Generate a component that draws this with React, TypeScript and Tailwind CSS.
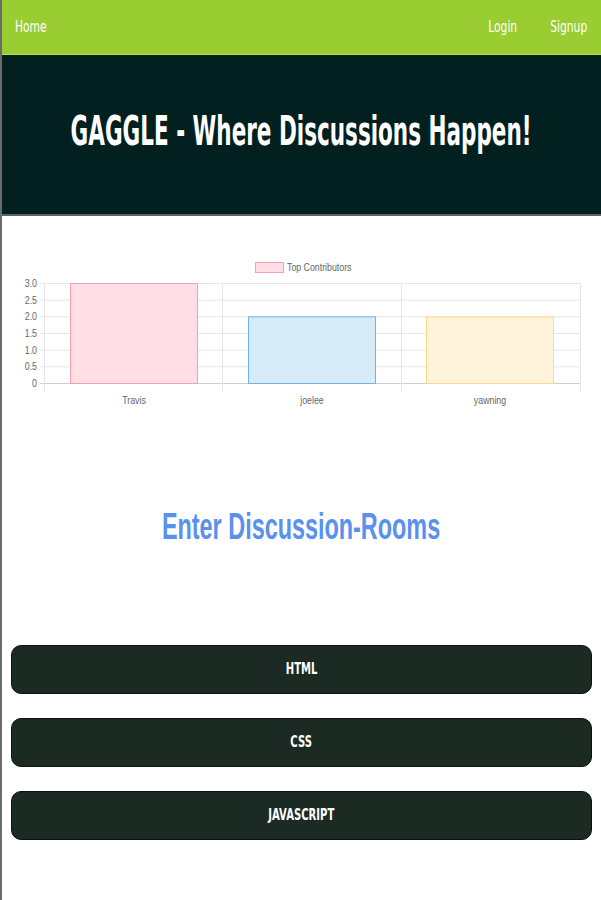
const rooms = ["HTML", "CSS", "JAVASCRIPT"];

const bars = [
  { name: "Travis", value: 3, x: 68, fill: "#ffdfe5", stroke: "#ff9db0" },
  { name: "joelee", value: 2, x: 246, fill: "#d7ebf8", stroke: "#6cb4e8" },
  { name: "yawning", value: 2, x: 424, fill: "#fff3dc", stroke: "#ffd98a" },
];

const chartFont = "Liberation Sans, Arial, sans-serif";

function ContributorsChart() {
  const top = 33;
  const bottom = 133;
  const ticks = [3, 2.5, 2, 1.5, 1, 0.5, 0];
  return (
    <svg width="599" height="160" viewBox="0 0 599 160" className="block">
      <rect x="253.5" y="12.5" width="28" height="10" fill="#ffdfe5" stroke="#ff9db0" />
      <text transform="translate(285 21) scale(0.8 1)" fontSize="11" fill="#666" fontFamily={chartFont}>
        Top Contributors
      </text>
      {ticks.map((t) => {
        const y = bottom - (t / 3) * (bottom - top);
        return (
          <g key={t}>
            <line x1="38" x2="578" y1={y + 0.5} y2={y + 0.5} stroke={t === 0 ? "#cfcfcf" : "#e6e6e6"} />
            <text
              transform={`translate(35 ${y + 4}) scale(0.8 1)`}
              fontSize="11"
              fill="#666"
              textAnchor="end"
              fontFamily={chartFont}
            >
              {t === 0 ? "0" : t.toFixed(1)}
            </text>
          </g>
        );
      })}
      {[42, 220, 399, 578].map((x) => (
        <line key={x} x1={x + 0.5} x2={x + 0.5} y1={top} y2={bottom + 8} stroke="#e6e6e6" />
      ))}
      {bars.map((b) => {
        const y = bottom - (b.value / 3) * (bottom - top);
        return (
          <g key={b.name}>
            <rect x={b.x + 0.5} y={y + 0.5} width="127" height={bottom - y} fill={b.fill} stroke={b.stroke} />
            <text
              transform={`translate(${b.x + 64} 154) scale(0.8 1)`}
              fontSize="11"
              fill="#666"
              textAnchor="middle"
              fontFamily={chartFont}
            >
              {b.name}
            </text>
          </g>
        );
      })}
    </svg>
  );
}

export default function App() {
  return (
    <div className="min-h-[900px] w-[601px] border-l-2 border-[#6b6b6b] bg-white font-['DejaVu_Sans','Liberation_Sans',sans-serif]">
      <nav className="flex h-[55px] items-center justify-between border-b border-[#b5e04a] bg-[#9acd32] pl-[13px] pr-[14px] text-[16px] text-white">
        <span className="inline-block origin-left scale-x-[0.67]">Home</span>
        <div className="flex items-center gap-[15px]">
          <span className="inline-block origin-right scale-x-[0.67]">Login</span>
          <span className="inline-block origin-right scale-x-[0.67]">Signup</span>
        </div>
      </nav>
      <header className="flex h-[161px] justify-center whitespace-nowrap border-b-2 border-[#5a6466] bg-[#022020] pt-[52px]">
        <h1 className="inline-block scale-x-[0.525] text-[41px] font-bold leading-[1.2] text-white">
          GAGGLE - Where Discussions Happen!
        </h1>
      </header>
      <section className="pt-[34px]">
        <ContributorsChart />
      </section>
      <div className="mt-[90px] flex justify-center whitespace-nowrap">
        <h2 className="inline-block scale-x-[0.65] font-['Liberation_Sans',Arial,sans-serif] text-[36px] font-bold text-[#5a91ee]">
          Enter Discussion-Rooms
        </h2>
      </div>
      <div className="mt-[91px] flex flex-col gap-[24px] pl-[9px] pr-[9px]">
        {rooms.map((room) => (
          <button
            key={room}
            className="h-[49px] w-full rounded-[10px] border border-[#0d1410] bg-[#1b2b23] text-[15px] font-bold text-white"
          >
            <span className="inline-block scale-x-[0.67]">{room}</span>
          </button>
        ))}
      </div>
    </div>
  );
}
